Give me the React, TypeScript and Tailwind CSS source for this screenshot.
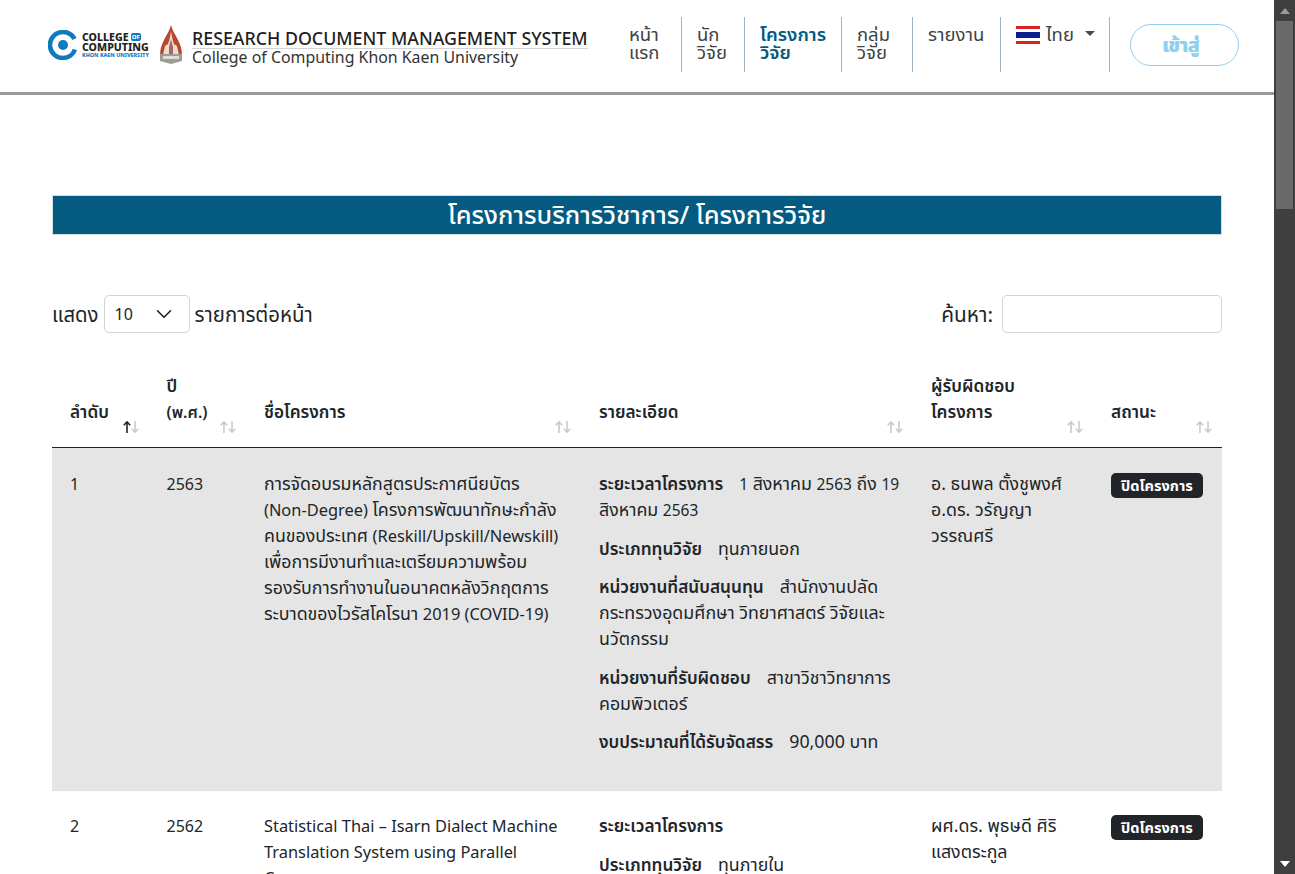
import React from "react";
import { ChevronDown } from "lucide-react";

const FONT = "font-['Noto_Sans','Noto_Sans_Thai','Open_Sans','DejaVu_Sans',sans-serif]";

// latin runs sit a little smaller than the thai around them
function L({ children }: { children: React.ReactNode }) {
  return <span className="text-[16.4px] leading-none">{children}</span>;
}

function D({ children }: { children: React.ReactNode }) {
  return <span className="text-[15.5px] leading-none">{children}</span>;
}

function SortIcon({ active = false }: { active?: boolean }) {
  return (
    <span className="flex h-[14px] items-center text-[#c8cacc]">
      <svg width="18" height="14" viewBox="0 0 18 14" fill="none" stroke="currentColor" strokeWidth="1.6">
        <path d="M5 13V2M1.8 5.2 5 2l3.2 3.2" stroke={active ? "#212529" : "currentColor"} />
        <path d="M13 1v11M9.8 8.8 13 12l3.2-3.2" />
      </svg>
    </span>
  );
}

function NavItem({ lines, active, w }: { lines: string[]; active?: boolean; w: string }) {
  return (
    <div className={`flex h-[55px] flex-col border-r border-[#9db4c8] pt-[8px] pl-[15px] text-[18.5px] leading-[18px] ${w} ${active ? "font-semibold text-[#045a80]" : "text-[#3d4246]"}`}>
      {lines.map((l) => (
        <span key={l}>{l}</span>
      ))}
    </div>
  );
}

function Detail({ label, children }: { label: string; children?: React.ReactNode }) {
  return (
    <p className="mb-[12.5px]">
      <span className="text-[17.2px] leading-none font-semibold">{label}</span>
      {children ? <span className="ml-4">{children}</span> : null}
    </p>
  );
}

function Badge() {
  return (
    <span className="mt-[1px] inline-block rounded-[5px] bg-[#212529] px-[10px] pt-[3px] pb-[4px] text-[14.6px] leading-[18px] font-bold text-white">
      ปิดโครงการ
    </span>
  );
}

function Th({ children, w, sort }: { children: React.ReactNode; w: string; sort?: boolean }) {
  return (
    <div className={`relative flex flex-col justify-end pb-[22px] pl-[18px] text-[17.2px] leading-[26px] font-semibold ${w}`}>
      {children}
      <span className="absolute right-[9px] bottom-[13px]">
        <SortIcon active={sort} />
      </span>
    </div>
  );
}

export default function App() {
  return (
    <div className={`flex h-[874px] w-[1295px] overflow-hidden bg-white text-[#212529] ${FONT}`}>
      <div className="w-[1274px] flex-none overflow-hidden">
        <header className="flex h-[95px] items-start border-b-[3px] border-[#999999] pl-[48px]">
          <div className="mt-[25px] flex items-center">
            <svg width="30" height="30" viewBox="0 0 30 30" className="flex-none">
              <path d="M26.5 9A13 13 0 1 0 15 28" fill="none" stroke="#0f7ac0" strokeWidth="4.6" />
              <path d="M15 28A13 13 0 0 0 27 19.5" fill="none" stroke="#0f7ac0" strokeWidth="4.6" />
              <rect x="22" y="10" width="8" height="8" fill="#fff" />
              <circle cx="15" cy="15" r="5" fill="#0f7ac0" />
            </svg>
            <div className="ml-[4px] w-[68px] text-[10.6px] leading-[10px] font-extrabold text-[#222]">
              <div className="flex items-center">
                COLLEGE
                <span className="ml-[2px] rounded-[2px] bg-[#0f7ac0] px-[1px] text-[6px] leading-[8px] text-white">OF</span>
              </div>
              <div className="whitespace-nowrap">COMPUTING</div>
              <div className="text-[5.4px] leading-[6px] whitespace-nowrap text-[#0f7ac0]">KHON KAEN UNIVERSITY</div>
            </div>
            <svg width="24" height="40" viewBox="0 0 24 40" className="ml-[9px] flex-none">
              <path d="M12 0C10 9 1 17 1 30h22C23 17 14 9 12 0Z" fill="#b5482f" />
              <path d="M12 6c-1 7-2 10-3 13l-3 2-2 9h16l-2-9-3-2c-1-3-2-6-3-13Z" fill="#e8ded8" />
              <path d="M12 14l-2 8v8h4v-8Z" fill="#a9675a" />
              <path d="M1 29h22v7l-11 3-11-3Z" fill="#9c9c96" />
              <path d="M4 31h16v3H4Z" fill="#dcdcd8" />
            </svg>
            <div className="mt-[2px] ml-[9px] w-[396px]">
              <div className="border-b border-[#d5d5d5] text-[17.8px] leading-[20px] font-medium whitespace-nowrap text-[#1f1f1f]">
                RESEARCH DOCUMENT MANAGEMENT SYSTEM
              </div>
              <div className="text-[15.9px] leading-[16px] whitespace-nowrap text-[#333]">
                College of Computing Khon Kaen University
              </div>
            </div>
          </div>
          <nav className="ml-[26px] mt-[17px] flex">
            <NavItem lines={["หน้า", "แรก"]} w="w-[68px]" />
            <NavItem lines={["นัก", "วิจัย"]} w="w-[63px]" />
            <NavItem lines={["โครงการ", "วิจัย"]} w="w-[97px]" active />
            <NavItem lines={["กลุ่ม", "วิจัย"]} w="w-[71px]" />
            <NavItem lines={["รายงาน"]} w="w-[88px]" />
            <div className="flex h-[55px] w-[109px] items-start border-r border-[#9db4c8] pt-[8px] pl-[15px] text-[18.5px] leading-[18px] text-[#3d4246]">
              <svg width="24" height="18" viewBox="0 0 24 18" className="mt-[1px] flex-none">
                <rect width="24" height="18" fill="#fff" />
                <rect width="24" height="3" fill="#d8232a" />
                <rect y="15" width="24" height="3" fill="#d8232a" />
                <rect y="6" width="24" height="6" fill="#0a1f8f" />
              </svg>
              <span className="ml-[6px]">ไทย</span>
              <span className="mt-[6px] ml-[11px] h-0 w-0 border-x-[5px] border-t-[5px] border-x-transparent border-t-[#4a4a4a]" />
            </div>
          </nav>
          <button className="mt-[24px] ml-[20px] h-[42px] w-[109px] rounded-full border border-[#8fd0f0] bg-white pr-[8px] text-[19px] font-bold text-[#8fd0f0] [text-shadow:1px_0_0_#8fd0f0]">
            เข้าสู่
          </button>
        </header>

        <main className="px-[52px] pt-[100px] text-[17.8px] leading-[26px]">
          <h1 className="h-[40px] border border-[#d8dde0] bg-[#045a80] text-center text-[25.4px] leading-[36px] font-medium text-white">
            โครงการบริการวิชาการ/ โครงการวิจัย
          </h1>

          <div className="mt-[60px] flex h-[38px] items-center justify-between text-[20.4px]">
            <div className="flex items-center">
              แสดง
              <div className="mr-[5px] ml-[5px] flex h-[38px] w-[86px] items-center justify-between rounded-[5px] border border-[#ced4da] pr-[12px] pl-[10px] text-[16px]">
                10
                <ChevronDown size={26} strokeWidth={1.5} />
              </div>
              รายการต่อหน้า
            </div>
            <div className="flex items-center">
              <span className="text-[20.8px]">ค้นหา:</span>
              <div className="ml-[9px] h-[38px] w-[220px] rounded-[5px] border border-[#ced4da]" />
            </div>
          </div>

          <div className="mt-[26px] flex h-[89px] border-b border-[#212529]">
            <Th w="w-[96.5px]" sort>ลำดับ</Th>
            <Th w="w-[97.5px]"><span>ปี</span><span className="text-[16px]">(พ.ศ.)</span></Th>
            <Th w="w-[335px]">ชื่อโครงการ</Th>
            <Th w="w-[332px]">รายละเอียด</Th>
            <Th w="w-[180px]"><span>ผู้รับผิดชอบ</span><span>โครงการ</span></Th>
            <Th w="w-[129px]">สถานะ</Th>
          </div>

          <div className="flex h-[343px] border-b border-[#dee2e6] bg-[#e5e5e5] pt-[23px]">
            <div className="w-[96.5px] pl-[18px] text-[16px]">1</div>
            <div className="w-[97.5px] pl-[18px] text-[16px]">2563</div>
            <div className="-mt-[1px] w-[335px] pl-[18px] whitespace-nowrap">
              การจัดอบรมหลักสูตรประกาศนียบัตร<br />
              <L>(Non-Degree)</L> โครงการพัฒนาทักษะกำลัง<br />
              คนของประเทศ <L>(Reskill/Upskill/Newskill)</L><br />
              เพื่อการมีงานทำและเตรียมความพร้อม<br />
              รองรับการทำงานในอนาคตหลังวิกฤตการ<br />
              ระบาดของไวรัสโคโรนา <L>2019 (COVID-19)</L>
            </div>
            <div className="-mt-[1px] w-[332px] pl-[18px] whitespace-nowrap">
              <Detail label="ระยะเวลาโครงการ"><D>1</D> สิงหาคม <D>2563</D> ถึง <D>19</D><br />สิงหาคม <D>2563</D></Detail>
              <Detail label="ประเภททุนวิจัย">ทุนภายนอก</Detail>
              <Detail label="หน่วยงานที่สนับสนุนทุน">สำนักงานปลัด<br />กระทรวงอุดมศึกษา วิทยาศาสตร์ วิจัยและ<br />นวัตกรรม</Detail>
              <Detail label="หน่วยงานที่รับผิดชอบ">สาขาวิชาวิทยาการ<br />คอมพิวเตอร์</Detail>
              <Detail label="งบประมาณที่ได้รับจัดสรร">90,000 บาท</Detail>
            </div>
            <div className="-mt-[1px] w-[180px] pl-[18px] whitespace-nowrap">
              อ. ธนพล ตั้งชูพงศ์<br />
              อ.ดร. วรัญญา<br />
              วรรณศรี
            </div>
            <div className="w-[129px] pl-[18px]"><Badge /></div>
          </div>

          <div className="flex pt-[22px]">
            <div className="w-[96.5px] pl-[18px] text-[16px]">2</div>
            <div className="w-[97.5px] pl-[18px] text-[16px]">2562</div>
            <div className="-mt-[1px] w-[335px] pl-[18px] whitespace-nowrap">
              <L>Statistical Thai – Isarn Dialect Machine</L><br />
              <L>Translation System using Parallel</L><br />
              <L>Corpus</L>
            </div>
            <div className="-mt-[1px] w-[332px] pl-[18px] whitespace-nowrap">
              <Detail label="ระยะเวลาโครงการ" />
              <Detail label="ประเภททุนวิจัย">ทุนภายใน</Detail>
            </div>
            <div className="-mt-[1px] w-[180px] pl-[18px] whitespace-nowrap">
              ผศ.ดร. พุธษดี ศิริ<br />
              แสงตระกูล
            </div>
            <div className="w-[129px] pl-[18px]"><Badge /></div>
          </div>
        </main>
      </div>

      <div className="flex w-[21px] flex-none flex-col bg-[#3f3f3f]">
        <div className="flex h-[21px] items-center justify-center">
          <span className="h-0 w-0 border-x-[5px] border-b-[6px] border-x-transparent border-b-[#9a9a9a]" />
        </div>
        <div className="h-[188px] w-[17px] self-center bg-[#6a6a6a]" />
        <div className="flex-1" />
        <div className="flex h-[21px] items-center justify-center">
          <span className="h-0 w-0 border-x-[5px] border-t-[6px] border-x-transparent border-t-white" />
        </div>
      </div>
    </div>
  );
}
